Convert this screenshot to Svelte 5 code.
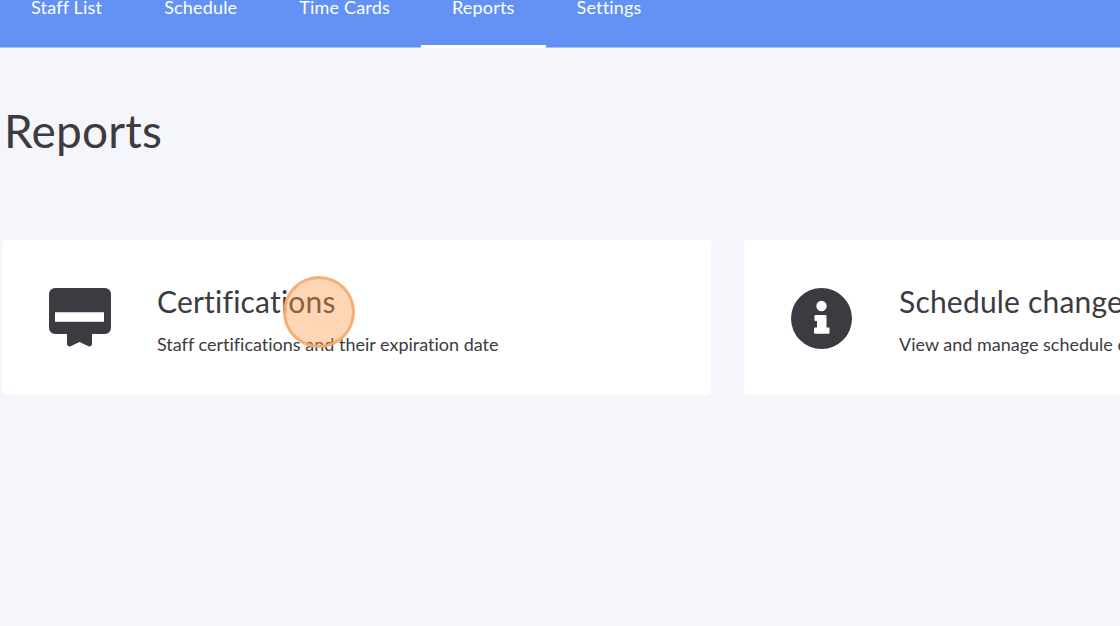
<script lang="ts">
  const tabs = ['Staff List', 'Schedule', 'Time Cards', 'Reports', 'Settings'];
  const active = 'Reports';

  const cards = [
    { id: 'cert', title: 'Certifications', text: 'Staff certifications and their expiration date' },
    { id: 'info', title: 'Schedule changes', text: 'View and manage schedule changes made by staff' }
  ];
</script>

<div class="page">
  <nav class="topnav">
    {#each tabs as tab}
      <span class="tab" class:active={tab === active}>{tab}</span>
    {/each}
  </nav>

  <main class="content">
    <h1>Reports</h1>
    <div class="cards">
      {#each cards as card}
        <div class="card">
          {#if card.id === 'cert'}
            <svg class="icon" viewBox="0 0 62 61" width="62" height="61">
              <path fill="#3c3b41" fill-rule="evenodd" d="M6 0H56a6 6 0 0 1 6 6V40a6 6 0 0 1-6 6H43V56a2.500 2.500 0 0 1-3.600 2.200L30.500 54 21.600 58.200A2.500 2.500 0 0 1 18 56V46H6a6 6 0 0 1-6-6V6A6 6 0 0 1 6 0ZM6 24.300V33.700H55V24.300Z"/>
            </svg>
          {:else}
            <svg class="icon" viewBox="0 0 62 61" width="62" height="61">
              <circle cx="30.500" cy="30.500" r="30.500" fill="#3c3b41"/>
              <circle cx="30.500" cy="18" r="5.200" fill="#fff"/>
              <path fill="#fff" d="M24.500 27H34.500A1 1 0 0 1 35.500 28V39.500H37.500A1 1 0 0 1 38.500 40.500V44.700A1 1 0 0 1 37.500 45.700H24A1 1 0 0 1 23 44.700V40.500A1 1 0 0 1 24 39.500H26V33H24.500A1 1 0 0 1 23.500 32V28A1 1 0 0 1 24.500 27Z"/>
            </svg>
          {/if}
          <div class="card-text">
            <div class="card-title">{card.title}</div>
            <div class="card-sub">{card.text}</div>
          </div>
        </div>
      {/each}
    </div>
  </main>

  <div class="click-marker"></div>
</div>

<style>
  :global(body) {
    background: #f4f6fb;
    overflow: hidden;
  }
  .page {
    position: relative;
    width: 1120px;
    height: 626px;
    overflow: hidden;
    font-family: Lato, 'Open Sans', sans-serif;
    font-variant-ligatures: none;
    color: #3c3b41;
  }
  .topnav {
    display: flex;
    height: 48px;
    box-sizing: border-box;
    background: #6492f4;
    border-bottom: 1px solid #a9c3f8;
  }
  .tab {
    padding: 0 31px;
    height: 48px;
    box-sizing: border-box;
    margin-top: -8px;
    line-height: 30px;
    font-size: 18px;
    letter-spacing: 0.18px;
    color: #fff;
  }
  .tab.active {
    height: 56px;
    border-bottom: 3px solid #fff;
  }
  .content {
    padding: 0 0 0 2px;
  }
  h1 {
    margin: 53px 0 0 2px;
    font-size: 46px;
    line-height: 60px;
    font-weight: 400;
    letter-spacing: 0.2px;
  }
  .cards {
    display: flex;
    gap: 33px;
    margin-top: 79px;
  }
  .card {
    flex: 0 0 709px;
    height: 155px;
    box-sizing: border-box;
    display: flex;
    align-items: flex-start;
    padding: 48px 0 0 47px;
    background: #fff;
    border-radius: 4px;
  }
  .icon {
    flex: none;
  }
  .card-text {
    margin-left: 46px;
    margin-top: -5px;
    white-space: nowrap;
  }
  .card-title {
    font-size: 30px;
    line-height: 36px;
    letter-spacing: 0.2px;
  }
  .card-sub {
    margin-top: 13px;
    font-size: 18px;
    line-height: 24px;
  }
  .click-marker {
    position: absolute;
    left: 283px;
    top: 276px;
    width: 72px;
    height: 72px;
    box-sizing: border-box;
    border-radius: 50%;
    background: rgba(255, 153, 71, 0.4);
    border: 3px solid rgba(246, 170, 105, 0.9);
  }
</style>
